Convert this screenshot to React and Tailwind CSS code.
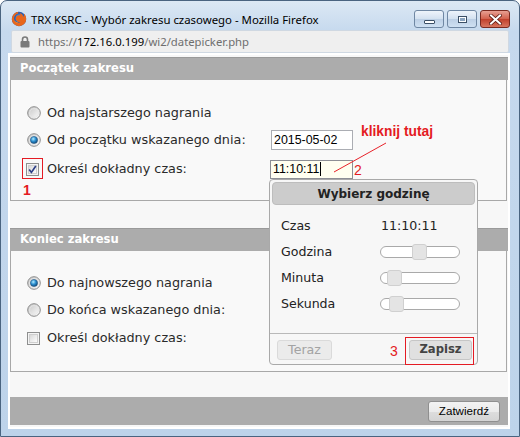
import React from "react";

function Radio({ checked }) {
  return (
    <svg width="14" height="14" viewBox="0 0 14 14" className="block">
      <defs>
        <linearGradient id="rbg" x1="0" y1="0" x2="1" y2="1">
          <stop offset="0" stopColor="#c4c4c4" />
          <stop offset="1" stopColor="#ffffff" />
        </linearGradient>
        <radialGradient id="rdot" cx="0.4" cy="0.35" r="0.75">
          <stop offset="0" stopColor="#b4ecff" />
          <stop offset="0.45" stopColor="#2b8fd0" />
          <stop offset="1" stopColor="#0b3a66" />
        </radialGradient>
      </defs>
      <circle cx="7" cy="7" r="6.3" fill="url(#rbg)" stroke="#8b8b8b" strokeWidth="1" />
      <circle cx="7" cy="7" r="4.4" fill="none" stroke="#e6e6e6" strokeWidth="0.8" />
      {checked && <circle cx="7" cy="7" r="3.6" fill="url(#rdot)" stroke="#1b4d7a" strokeWidth="0.5" />}
    </svg>
  );
}

function Check({ checked }) {
  return (
    <svg width="13" height="13" viewBox="0 0 13 13" className="block">
      <defs>
        <linearGradient id="cbg" x1="0" y1="0" x2="1" y2="1">
          <stop offset="0" stopColor="#d6d6d6" />
          <stop offset="1" stopColor="#ffffff" />
        </linearGradient>
      </defs>
      <rect x="0.5" y="0.5" width="12" height="12" fill="#f4f4f4" stroke="#8e8f8f" />
      <rect x="2.5" y="2.5" width="8" height="8" fill="url(#cbg)" stroke="#cfcfcf" />
      {checked && <path d="M3.2 6.4 L5.4 9.4 L9.8 3.0" fill="none" stroke="#2d3f87" strokeWidth="1.7" />}
    </svg>
  );
}

function Row({ control, label, children, className = "" }) {
  return (
    <div className={"flex items-center h-[20px] " + className}>
      <div className="w-[36px] pl-[16px] flex items-center">{control}</div>
      <div className="w-[224px] text-[12.8px] text-[#2a2a2a] leading-[20px] whitespace-nowrap">{label}</div>
      {children}
    </div>
  );
}

function Header({ children }) {
  return (
    <div className="h-[23px] bg-[#acacac] pl-[10px] flex items-center text-white font-bold text-[11.6px] border-t border-[#9a9a9a]">
      {children}
    </div>
  );
}

function Slider({ pos }) {
  return (
    <div className="relative w-[80px] h-[12px] rounded-[6px] border border-[#a9a9a9] bg-white">
      <div
        className="absolute top-[-3px] w-[15px] h-[16px] rounded-[3px] bg-[#e4e4e4] border border-[#d0d0d0]"
        style={{ left: pos }}
      />
    </div>
  );
}

function WinBtn({ children, close }) {
  return (
    <div
      className={
        "w-[30px] h-[18px] rounded-[3px] border flex items-center justify-center " +
        (close
          ? "border-[#7a2a20] bg-[linear-gradient(to_bottom,#e8a093,#d2604c_50%,#c0402c_51%,#d8755f)]"
          : "border-[#6f87a3] bg-[linear-gradient(to_bottom,#eef4fb,#d3e1f0_50%,#bccfe5_51%,#cfe0f2)]")
      }
    >
      {children}
    </div>
  );
}

export default function App() {
  return (
    <div className="relative w-[520px] h-[437px] overflow-hidden rounded-t-[7px] border border-[#4a6480] bg-[linear-gradient(to_bottom,#dce8f4,#c6d9ee_30px,#bdd3ea)] flex flex-col font-['DejaVu_Sans',sans-serif]">
      {/* Title bar */}
      <div className="h-[29px] flex items-start shrink-0">
        <div className="ml-[10px] mt-[10px] w-[16px] h-[16px]">
          <svg width="16" height="16" viewBox="0 0 16 16">
            <circle cx="8" cy="8" r="7.2" fill="#2f5fae" />
            <circle cx="8.6" cy="7.2" r="4" fill="#4a86cf" />
            <path
              d="M8 0.8 A7.2 7.2 0 1 0 15.2 8 C15.2 5.6 14.2 3.8 12.8 2.6 C13.3 4 13 5.4 12.2 6 C12 3.8 10.4 2.2 8.4 1.9 C9.4 2.8 9.6 3.9 9 4.5 C7.4 4 5.6 4.6 5 6.4 C4.2 9.2 6.8 11.6 9.6 10.8 C7.2 12.8 3 11.2 3 7.6 C3 4.8 5 2.8 7.4 2.4 C6.4 1.6 7 1 8 0.8 Z"
              fill="#e8661c"
            />
            <path d="M3 7.6 C3 11.2 7.2 12.8 9.6 10.8 C8 12.4 4.5 12.6 3.4 9.6 Z" fill="#f7a234" />
          </svg>
        </div>
        <div className="ml-[4px] mt-[10px] text-[11.4px] leading-[17px] text-black font-['Noto_Sans',sans-serif] whitespace-nowrap">
          TRX KSRC - Wybór zakresu czasowego - Mozilla Firefox
        </div>
        <div className="ml-auto mr-[9px] mt-[9px] flex gap-[3px]">
          <WinBtn>
            <div className="w-[11px] h-[4px] bg-white border border-[#3b4f66] rounded-[1px] mt-[5px]" />
          </WinBtn>
          <WinBtn>
            <div className="w-[9px] h-[7px] border border-[#3b4f66] bg-white flex items-center justify-center">
              <div className="w-[5px] h-[3px] bg-[#8aa4c0]" />
            </div>
          </WinBtn>
          <WinBtn close>
            <svg width="13" height="11" viewBox="0 0 13 11">
              <path d="M2 1.5 L11 9.5 M11 1.5 L2 9.5" stroke="#5a1a12" strokeWidth="3.6" strokeLinecap="square" />
              <path d="M2 1.5 L11 9.5 M11 1.5 L2 9.5" stroke="#ffffff" strokeWidth="2" strokeLinecap="square" />
            </svg>
          </WinBtn>
        </div>
      </div>

      {/* Address bar */}
      <div className="mx-[10px] h-[23px] shrink-0 rounded-[2px] border border-[#cfd8e2] bg-[#efefef] flex items-center pl-[8px]">
        <svg width="10" height="12" viewBox="0 0 10 12" className="block">
          <path d="M2.5 5 V3.5 A2.5 2.5 0 0 1 7.5 3.5 V5" fill="none" stroke="#7a7a7a" strokeWidth="1.6" />
          <rect x="0.5" y="5" width="9" height="6.5" rx="1" fill="#7a7a7a" />
        </svg>
        <div className="ml-[8px] text-[11.3px] leading-[16px] font-['Noto_Sans',sans-serif] whitespace-nowrap text-[#6e6e6e]">
          https://<span className="text-black">172.16.0.199</span>/wi2/datepicker.php
        </div>
      </div>

      {/* Content */}
      <div className="ml-[7px] mr-[9px] mb-[7px] flex-1 border-2 border-white bg-[#f7f7f7] pt-[2px] flex flex-col">
        {/* Section 1 */}
        <Header>Początek zakresu</Header>
        <div className="h-[121px] border-l border-r border-b border-[#a8a8a8] mr-[1px] pt-[23px] bg-[#f9f9f9]">
          <Row control={<Radio />} label="Od najstarszego nagrania" />
          <Row control={<Radio checked />} label="Od początku wskazanego dnia:" className="mt-[7px]">
            <div className="w-[82px] h-[20px] border border-[#abadb3] bg-white flex items-center pl-[2px] text-[12.4px] text-black font-['Liberation_Sans',sans-serif]">
              2015-05-02
            </div>
          </Row>
          <Row
            control={<div className="-ml-[1px]"><Check checked /></div>}
            label="Określ dokładny czas:"
            className="mt-[9px]"
          >
            <div className="-ml-[1px] w-[83px] h-[19px] border border-[#8d8f95] bg-[#fffff0] flex items-center pl-[2px] text-[12.4px] text-black font-['Liberation_Sans',sans-serif]">
              11:10:11
              <div className="w-[1px] h-[14px] bg-black ml-[1px]" />
            </div>
          </Row>
        </div>

        {/* Section 2 */}
        <div className="mt-[27px]">
          <Header>Koniec zakresu</Header>
        </div>
        <div className="h-[121px] border-l border-r border-b border-[#a8a8a8] mr-[1px] pt-[22px] bg-[#f9f9f9]">
          <Row control={<Radio checked />} label="Do najnowszego nagrania" />
          <Row control={<Radio />} label="Do końca wskazanego dnia:" className="mt-[7px]" />
          <Row control={<Check />} label="Określ dokładny czas:" className="mt-[8px]" />
        </div>

        {/* Footer */}
        <div className="mt-[25px] h-[28px] bg-[#acacac] flex items-center justify-end pr-[8px]">
          <div className="w-[72px] h-[21px] rounded-[3px] border border-[#8f8f8f] bg-[linear-gradient(to_bottom,#f3f3f3,#ebebeb_50%,#dddddd_51%,#d4d4d4)] flex items-center justify-center text-[11.6px] text-black font-['Liberation_Sans',sans-serif]">
            Zatwierdź
          </div>
        </div>
      </div>

      {/* Time picker popup */}
      <div className="absolute left-[268px] top-[178px] w-[209px] h-[186px] rounded-[4px] border border-[#a9a9a9] bg-[#f7f7f7] flex flex-col">
        <div className="mx-[2px] mt-[2px] h-[23px] rounded-[4px] border border-[#bdbdbd] bg-[#cccccc] flex items-center justify-center text-[12px] font-bold text-[#222]">
          Wybierz godzinę
        </div>
        <div className="mt-[8px] text-[12.6px] text-[#222]">
          <div className="h-[26px] flex items-center pl-[11px]">
            <div className="w-[100px]">Czas</div>
            <div>11:10:11</div>
          </div>
          <div className="h-[26px] flex items-center pl-[11px]">
            <div className="w-[99px]">Godzina</div>
            <Slider pos={31} />
          </div>
          <div className="h-[26px] flex items-center pl-[11px]">
            <div className="w-[99px]">Minuta</div>
            <Slider pos={6} />
          </div>
          <div className="h-[26px] flex items-center pl-[11px]">
            <div className="w-[99px]">Sekunda</div>
            <Slider pos={8} />
          </div>
        </div>
        <div className="mt-[16px] border-t border-[#b9b9b9] pt-[6px] flex items-center pl-[7px] pr-[5px]">
          <div className="w-[55px] h-[20px] rounded-[3px] border border-[#dadada] bg-[#ebebeb] flex items-center justify-center text-[12.6px] text-[#a3a3a3]">
            Teraz
          </div>
          <div className="ml-auto w-[63px] h-[20px] rounded-[3px] border border-[#c6c6c6] bg-[#e0e0e0] flex items-center justify-center text-[11.6px] font-bold text-[#444]">
            Zapisz
          </div>
        </div>
      </div>

      {/* Annotations */}
      <svg className="absolute left-0 top-0 pointer-events-none" width="520" height="437">
        <line x1="333" y1="171" x2="385" y2="142" stroke="#e8222a" strokeWidth="1" />
        <rect x="21.5" y="157.5" width="20" height="20" fill="none" stroke="#e41b23" strokeWidth="1" />
        <rect x="404.5" y="336.5" width="68" height="27" fill="none" stroke="#e41b23" strokeWidth="1" />
      </svg>
      <div className="absolute left-[360px] top-[123px] text-[13.8px] leading-[16px] font-bold text-[#e41b23] font-['Liberation_Sans',sans-serif] whitespace-nowrap">
        kliknij tutaj
      </div>
      <div className="absolute left-[353px] top-[161px] text-[14px] leading-[16px] text-[#e41b23] font-['Liberation_Sans',sans-serif]">
        2
      </div>
      <div className="absolute left-[22px] top-[181px] text-[14px] leading-[16px] font-bold text-[#e41b23] font-['Liberation_Sans',sans-serif]">
        1
      </div>
      <div className="absolute left-[389px] top-[342px] text-[14px] leading-[16px] text-[#e41b23] font-['Liberation_Sans',sans-serif]">
        3
      </div>
    </div>
  );
}
